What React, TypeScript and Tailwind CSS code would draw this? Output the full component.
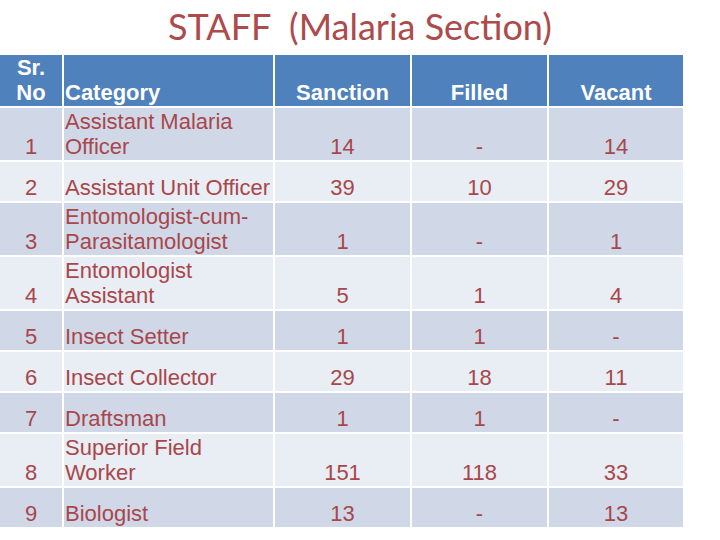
const rows = [
  { no: "1", category: ["Assistant Malaria", "Officer"], sanction: "14", filled: "-", vacant: "14" },
  { no: "2", category: ["Assistant Unit Officer"], sanction: "39", filled: "10", vacant: "29" },
  { no: "3", category: ["Entomologist-cum-", "Parasitamologist"], sanction: "1", filled: "-", vacant: "1" },
  { no: "4", category: ["Entomologist", "Assistant"], sanction: "5", filled: "1", vacant: "4" },
  { no: "5", category: ["Insect Setter"], sanction: "1", filled: "1", vacant: "-" },
  { no: "6", category: ["Insect Collector"], sanction: "29", filled: "18", vacant: "11" },
  { no: "7", category: ["Draftsman"], sanction: "1", filled: "1", vacant: "-" },
  { no: "8", category: ["Superior Field", "Worker"], sanction: "151", filled: "118", vacant: "33" },
  { no: "9", category: ["Biologist"], sanction: "13", filled: "-", vacant: "13" },
];

export default function App() {
  return (
    <div className="h-[540px] w-[720px] overflow-hidden bg-white">
      <h1 className="h-[55px] whitespace-pre pt-[4px] text-center font-['Lato',sans-serif] text-[36px] leading-[44px] text-[#ad4a4b]">
        STAFF  (Malaria Section)
      </h1>
      <table className="w-[684px] table-fixed border-collapse font-['Liberation_Sans',Arial,sans-serif] text-[22px] leading-[25px]">
        <colgroup>
          <col className="w-[63px]" />
          <col className="w-[211px]" />
          <col className="w-[137px]" />
          <col className="w-[137px]" />
          <col className="w-[136px]" />
        </colgroup>
        <thead>
          <tr className="h-[52px] bg-[#4f81bd] font-bold text-white">
            <th className="border-x-2 border-b-2 border-white pb-[1px] text-center align-bottom font-bold first:border-l-0">
              Sr.
              <br />
              No
            </th>
            <th className="border-x-2 border-b-2 border-white pb-[1px] pl-[1px] text-left align-bottom font-bold">
              Category
            </th>
            <th className="border-x-2 border-b-2 border-white pb-[1px] text-center align-bottom font-bold">
              Sanction
            </th>
            <th className="border-x-2 border-b-2 border-white pb-[1px] text-center align-bottom font-bold">
              Filled
            </th>
            <th className="border-x-2 border-b-2 border-white pb-[1px] text-center align-bottom font-bold">
              Vacant
            </th>
          </tr>
        </thead>
        <tbody className="text-[#a8474b]">
          {rows.map((row, i) => {
            const two = row.category.length > 1;
            return (
              <tr
                key={row.no}
                className={`${two ? "h-[54px]" : "h-[41px]"} ${i % 2 === 0 ? "bg-[#d0d8e8]" : "bg-[#e9edf4]"}`}
              >
                <td className="border-2 border-l-0 border-white pb-[1px] text-center align-bottom">{row.no}</td>
                <td className="border-2 border-white pb-[1px] pl-[1px] text-left align-bottom">
                  {row.category.map((line, j) => (
                    <div key={j}>{line}</div>
                  ))}
                </td>
                <td className="border-2 border-white pb-[1px] text-center align-bottom">{row.sanction}</td>
                <td className="border-2 border-white pb-[1px] text-center align-bottom">{row.filled}</td>
                <td className="border-2 border-white pb-[1px] text-center align-bottom">{row.vacant}</td>
              </tr>
            );
          })}
        </tbody>
      </table>
    </div>
  );
}
